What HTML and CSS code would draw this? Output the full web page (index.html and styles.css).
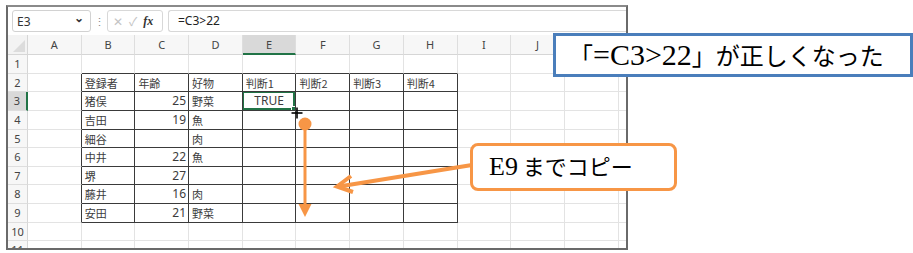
FILE: index.html
```html
<!DOCTYPE html>
<html lang="ja">
<head>
  <meta charset="UTF-8">
  <title>E9 までコピー</title>
  <link rel="stylesheet" href="styles.css">
</head>
<body>
<div class="stage">
  <div class="excel">
    <div class="fbar">
      <div class="namebox"><span>E3</span><span class="chev">&#8964;</span></div>
      <div class="dots">&#8942;</div>
      <div class="fxbox"><span class="x">&#10005;</span><span class="ok">&#10003;</span><span class="fx">fx</span></div>
      <div class="formula">=C3&gt;22</div>
    </div>
    <div class="grid" id="grid"></div>
  </div>

  <svg class="arrows" width="913" height="253" viewBox="0 0 913 253">
    <circle cx="305" cy="124" r="6.5" fill="#f79646"/>
    <line x1="305" y1="124" x2="305" y2="206" stroke="#f79646" stroke-width="3"/>
    <polygon points="298.5,204 311.5,204 305,217" fill="#f79646"/>
    <line x1="472" y1="165" x2="339" y2="186.5" stroke="#f79646" stroke-width="4"/>
    <polyline points="351,176 337,186.5 353,192" fill="none" stroke="#f79646" stroke-width="4" stroke-linejoin="miter"/>
    <g stroke-width="1.6">
      <line x1="297" y1="107.5" x2="297" y2="118.5" stroke="#000"/>
      <line x1="291.5" y1="113" x2="302.5" y2="113" stroke="#000"/>
    </g>
  </svg>

  <div class="note note-blue"><span class="ja">「</span><span class="lat">=C3&gt;22</span><span class="ja">」が正しくなった</span></div>
  <div class="note note-orange"><span class="lat">E9</span><span class="ja"> までコピー</span></div>
</div>

<script>
  const cols = ['', 'A', 'B', 'C', 'D', 'E', 'F', 'G', 'H', 'I', 'J', 'K', 'L'];
  const data = {
    2: ['登録者', '年齢', '好物', '判断1', '判断2', '判断3', '判断4'],
    3: ['猪俣', '25', '野菜', 'TRUE'],
    4: ['吉田', '19', '魚'],
    5: ['細谷', '', '肉'],
    6: ['中井', '22', '魚'],
    7: ['堺', '27', ''],
    8: ['藤井', '16', '肉'],
    9: ['安田', '21', '野菜']
  };
  const grid = document.getElementById('grid');

  function cell(cls, text) {
    const d = document.createElement('div');
    d.className = cls;
    d.textContent = text || '';
    grid.appendChild(d);
  }

  // header row
  cols.forEach((c, i) => {
    if (i === 0) cell('corner');
    else cell('colhead' + (c === 'E' ? ' sel' : ''), c);
  });

  for (let r = 1; r <= 11; r++) {
    cell('rowhead' + (r === 3 ? ' sel' : ''), r);
    for (let c = 1; c < cols.length; c++) {
      let cls = 'cell';
      let text = '';
      const inTable = r >= 2 && r <= 9 && c >= 2 && c <= 8;
      if (inTable) {
        cls += ' tb';
        text = (data[r] && data[r][c - 2]) || '';
        if (r > 2 && c === 3) cls += ' num';
      }
      if (r === 1 && c >= 2 && c <= 8) cls += ' top';
      if (c === 1 && r >= 2 && r <= 9) cls += ' lft';
      if (r === 3 && c === 5) cls += ' active';
      cell(cls, text);
    }
  }
</script>
</body>
</html>
```

FILE: styles.css
```css
body {
  margin: 0;
  background: #fff;
}

.stage {
  position: relative;
  width: 913px;
  height: 253px;
  overflow: hidden;
}

.excel {
  margin: 5px 0 0 6px;
  width: 618px;
  height: 241px;
  border: 2px solid #6a6a6a;
  border-top-color: #8a8a8a;
  overflow: hidden;
  background: #fff;
  font-family: "Noto Sans", "Noto Sans CJK JP", sans-serif;
}

/* formula bar */
.fbar {
  display: flex;
  align-items: center;
  height: 28px;
  padding-left: 4px;
  background: #fff;
}

.namebox {
  display: flex;
  align-items: center;
  justify-content: space-between;
  width: 79px;
  height: 22px;
  padding: 0 6px 0 4px;
  border: 1px solid #d2d2d2;
  border-radius: 3px;
  font-size: 12px;
  color: #333;
  box-sizing: border-box;
}

.chev {
  font-size: 12px;
  font-weight: bold;
  line-height: 6px;
  margin-top: -6px;
}

.dots {
  width: 16px;
  text-align: center;
  font-size: 11px;
  color: #888;
}

.fxbox {
  display: flex;
  align-items: center;
  width: 56px;
  height: 22px;
  border: 1px solid #d8d8d8;
  border-radius: 3px;
  box-sizing: border-box;
  padding-left: 5px;
  gap: 6px;
}

.fxbox .x,
.fxbox .ok {
  color: #c4c4c4;
  font-size: 12px;
}

.fxbox .fx {
  font-family: "Liberation Serif", serif;
  font-style: italic;
  font-weight: bold;
  font-size: 12px;
  color: #333;
}

.formula {
  flex: 1;
  height: 22px;
  margin-left: 5px;
  border: 1px solid #d8d8d8;
  border-right: none;
  border-radius: 3px 0 0 3px;
  box-sizing: border-box;
  padding-left: 9px;
  font-size: 12px;
  line-height: 20px;
  color: #222;
}

/* sheet grid */
.grid {
  display: grid;
  grid-template-columns: 20px repeat(12, 53.7px);
  grid-template-rows: 20px repeat(11, 18.65px);
  font-size: 11px;
  color: #333;
}

.grid > div {
  box-sizing: border-box;
  white-space: nowrap;
  overflow: hidden;
}

.corner {
  background: #f3f3f3;
  border-right: 1px solid #d6d6d6;
  border-bottom: 1px solid #d6d6d6;
  position: relative;
}

.corner::after {
  content: "";
  position: absolute;
  right: 2px;
  bottom: 2px;
  border-left: 12px solid transparent;
  border-bottom: 12px solid #dcdcdc;
}

.colhead {
  background: #f7f7f7;
  border-right: 1px solid #dedede;
  border-bottom: 1px solid #d6d6d6;
  text-align: center;
  line-height: 19px;
  color: #444;
}

.colhead.sel {
  background: #d9d9d9;
  border-bottom: 2px solid #217346;
}

.rowhead {
  background: #f7f7f7;
  border-right: 1px solid #d6d6d6;
  border-bottom: 1px solid #dedede;
  text-align: center;
  line-height: 18px;
  color: #444;
}

.rowhead.sel {
  background: #d9d9d9;
  border-right: 2px solid #217346;
}

.cell {
  border-right: 1px solid #e3e3e3;
  border-bottom: 1px solid #e3e3e3;
  line-height: 18px;
  padding-left: 3px;
}

.cell.tb {
  border-right-color: #3a3a3a;
  border-bottom-color: #3a3a3a;
  font-family: "Noto Sans CJK JP", sans-serif;
  color: #3c3c3c;
}

.cell.top {
  border-bottom-color: #3a3a3a;
}

.cell.lft {
  border-right-color: #3a3a3a;
}

.cell.num {
  text-align: right;
  padding: 0 2px 0 0;
  font-family: "Noto Sans", sans-serif;
  font-size: 12px;
}

.cell.active {
  position: relative;
  text-align: center;
  font-family: "Noto Sans", sans-serif;
  font-size: 12px;
  padding: 0;
}

.cell.active::before {
  content: "";
  position: absolute;
  inset: -1px 0 0 -1px;
  border: 2px solid #217346;
}

.cell.active::after {
  content: "";
  position: absolute;
  right: -2px;
  bottom: -2px;
  width: 4px;
  height: 4px;
  background: #217346;
  border: 1px solid #fff;
}

/* overlays */
.arrows {
  position: absolute;
  left: 0;
  top: 0;
}

.note {
  position: absolute;
  display: flex;
  align-items: baseline;
  box-sizing: border-box;
  background: #fff;
  color: #000;
  white-space: pre;
}

.note .lat {
  font-family: "Liberation Serif", serif;
}

.note .ja {
  font-family: "Noto Sans CJK JP", sans-serif;
}

.note-blue {
  left: 553px;
  top: 33px;
  width: 360px;
  height: 44px;
  border: 3px solid #4a7ebb;
  padding: 1px 0 0 13px;
}

.note-blue .lat {
  font-size: 30px;
}

.note-blue .ja {
  font-size: 24px;
}

.note-orange {
  left: 470px;
  top: 143px;
  width: 207px;
  height: 48px;
  border: 3px solid #f79646;
  border-radius: 8px;
  padding: 3px 0 0 16px;
}

.note-orange .lat {
  font-size: 26px;
}

.note-orange .ja {
  font-size: 22px;
}
```
